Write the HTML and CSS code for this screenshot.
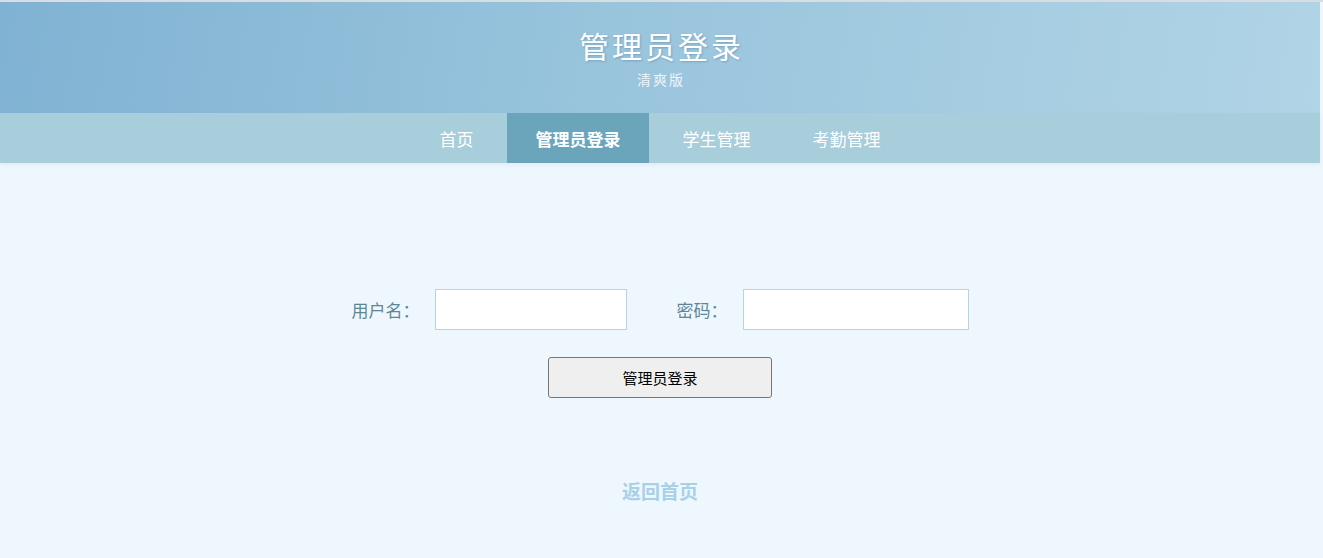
FILE: index.html
```html
<!DOCTYPE html>
<html lang="zh-CN">
<head>
<meta charset="utf-8">
<title>管理员登录</title>
<link rel="stylesheet" href="styles.css">
</head>
<body>
<div class="page">
  <header class="header">
    <h1 class="title">管理员登录</h1>
    <p class="subtitle">清爽版</p>
  </header>
  <nav class="nav">
    <a class="nav-item" href="#">首页</a>
    <a class="nav-item active" href="#">管理员登录</a>
    <a class="nav-item" href="#">学生管理</a>
    <a class="nav-item" href="#">考勤管理</a>
  </nav>
  <main class="main">
    <form class="login-form">
      <div class="form-row">
        <label class="field">
          <span class="label">用户名：</span>
          <input class="input input-user" type="text">
        </label>
        <label class="field">
          <span class="label">密码：</span>
          <input class="input input-pass" type="password">
        </label>
      </div>
      <button class="btn" type="button">管理员登录</button>
    </form>
    <a class="back" href="#">返回首页</a>
  </main>
</div>
</body>
</html>
```

FILE: styles.css
```css
html, body {
  margin: 0;
  padding: 0;
  background: #eff7fe;
}
body {
  font-family: "Noto Sans CJK SC", "Noto Sans", sans-serif;
  border-top: 2px solid #d7dde1;
  height: 556px;
  overflow: hidden;
}
.page {
  width: 1320px;
}
.header {
  height: 111px;
  background: linear-gradient(100deg, #80b2d3 0%, #98c4dc 45%, #b1d4e6 100%);
  display: flex;
  flex-direction: column;
  align-items: center;
  box-sizing: border-box;
  padding-top: 23px;
}
.title {
  margin: 0;
  font-size: 30px;
  line-height: 40px;
  font-weight: 400;
  color: #ffffff;
  letter-spacing: 3px;
  padding-left: 3px;
  text-shadow: 1px 1px 2px rgba(60, 100, 130, 0.35);
}
.subtitle {
  margin: 6px 0 0;
  font-size: 14px;
  line-height: 16px;
  color: rgba(255, 255, 255, 0.85);
  letter-spacing: 2px;
  padding-left: 2px;
}
.nav {
  height: 50px;
  background: #a8cddb;
  display: flex;
  justify-content: center;
  gap: 5px;
  box-shadow: 0 2px 4px rgba(120, 160, 180, 0.12);
}
.nav-item {
  display: flex;
  align-items: center;
  padding: 0 28.5px;
  font-size: 17px;
  color: #ffffff;
  text-decoration: none;
}
.nav-item.active {
  background: #6aa5bc;
  font-weight: 700;
}
.main {
  display: flex;
  flex-direction: column;
  align-items: center;
  padding-top: 126px;
}
.login-form {
  display: flex;
  flex-direction: column;
  align-items: center;
  gap: 27px;
}
.form-row {
  display: flex;
  align-items: center;
  gap: 50px;
}
.field {
  display: flex;
  align-items: center;
  gap: 15px;
}
.label {
  font-size: 17px;
  color: #5d8796;
}
.input {
  box-sizing: border-box;
  height: 41px;
  border: 1px solid #b3d5e6;
  background: #ffffff;
  border-radius: 0;
  outline: none;
}
.input-user { width: 192px; }
.input-pass { width: 226px; }
.btn {
  width: 224px;
  height: 41px;
  background: #efefef;
  border: 1px solid #767676;
  border-radius: 3px;
  font-family: "Noto Sans CJK SC", "Noto Sans", sans-serif;
  font-size: 15px;
  color: #000000;
}
.back {
  margin-top: 80px;
  font-size: 19px;
  line-height: 25px;
  font-weight: 700;
  color: #a9d1e6;
  text-decoration: none;
}
```
